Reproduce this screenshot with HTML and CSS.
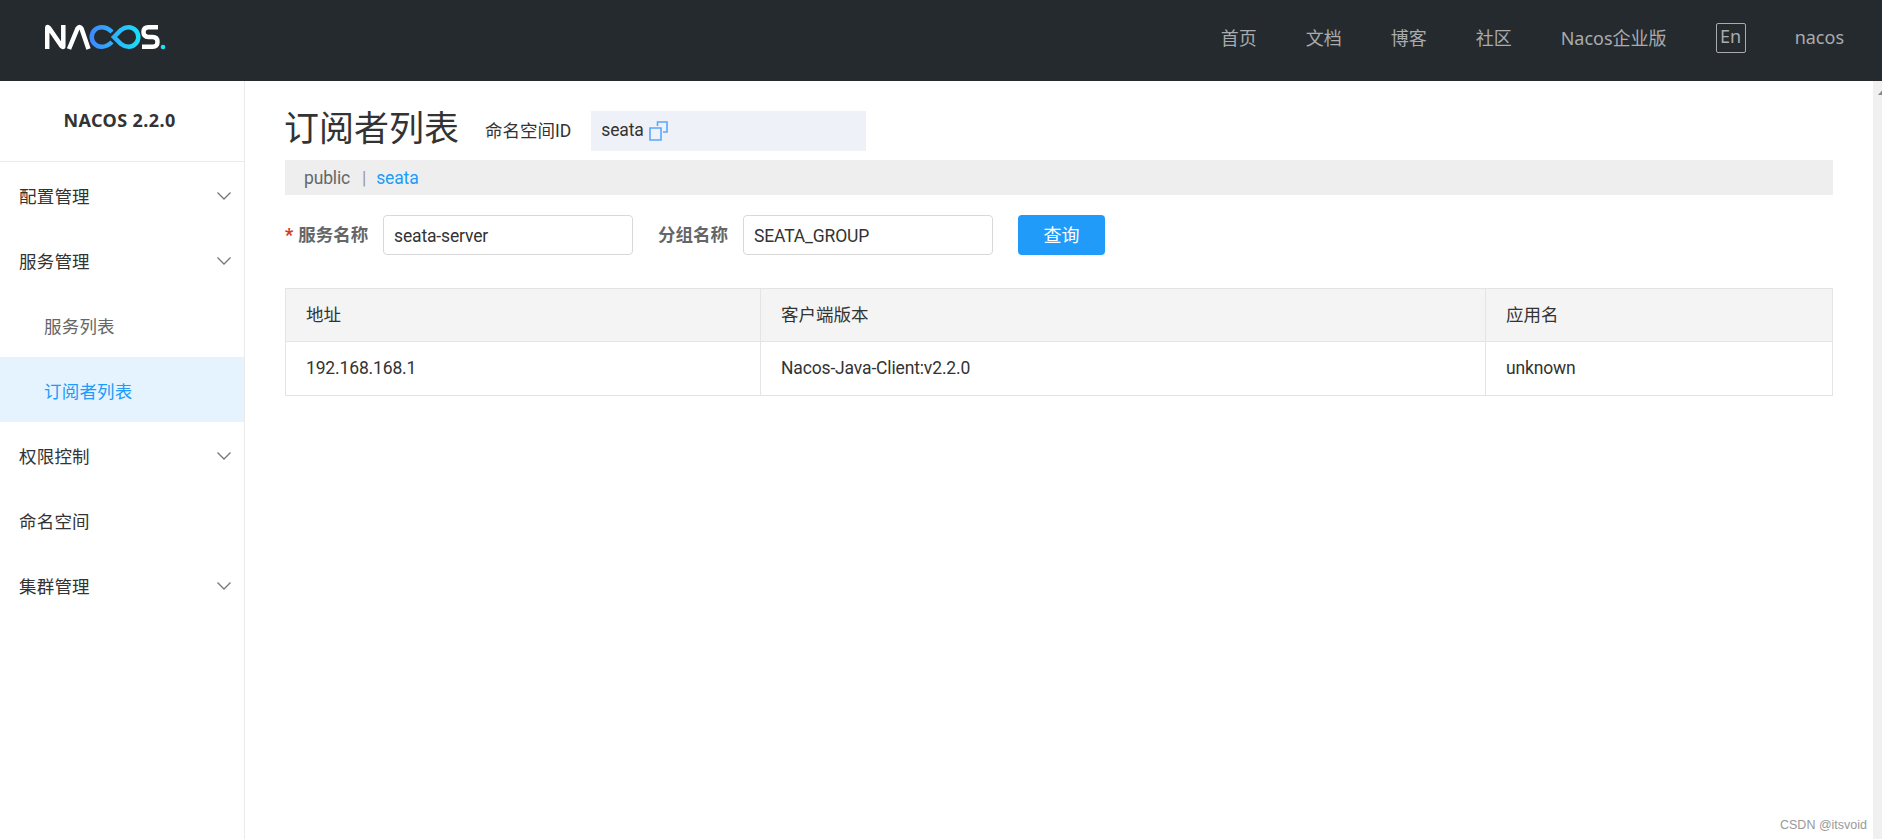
FILE: index.html
```
<!DOCTYPE html>
<html lang="zh-CN">
<head>
<meta charset="UTF-8">
<meta name="viewport" content="width=device-width, initial-scale=1">
<title>Nacos</title>
<link rel="stylesheet" href="styles.css">
</head>
<body>

  <!-- Header -->
  <header class="header">
    <a class="logo" href="#">
      <svg width="122" height="26" viewBox="0 0 122 26" fill="none" stroke-width="4.500">
        <defs>
          <linearGradient id="loop" x1="45" y1="0" x2="95" y2="0" gradientUnits="userSpaceOnUse">
            <stop offset="0" stop-color="#3f87ff"/>
            <stop offset="1" stop-color="#1be0f8"/>
          </linearGradient>
        </defs>
        <path d="M2.200 25V4Q2.200 2 4 4L16.500 22Q18.300 24 18.300 22V1" stroke="#fff"/>
        <path d="M24 25L32.500 4.500Q34.500 1.500 36.500 4.500L43.500 25" stroke="#fff"/>
        <path d="M67 8C63 4 60 3.200 56.500 3.200A9.800 9.800 0 0 0 56.500 22.800C60 22.800 63 22 67 18" stroke="url(#loop)"/>
        <path d="M69 13L76 6C79 3.700 81 3.200 83.500 3.200A9.800 9.800 0 0 1 83.500 22.800C81 22.800 79 22.300 76 20Z" stroke="url(#loop)"/>
        <path d="M113 3.200H103.500Q98.500 3.200 98.500 8T103.500 13H107.500Q112.500 13 112.500 18T107.500 22.800H97" stroke="#fff"/>
        <circle cx="118" cy="23" r="2.300" fill="#1be0f8"/>
      </svg>
    </a>
    <nav class="nav">
      <a href="#">首页</a>
      <a href="#">文档</a>
      <a href="#">博客</a>
      <a href="#">社区</a>
      <a href="#">Nacos企业版</a>
      <span class="lang">En</span>
      <a href="#">nacos</a>
    </nav>
  </header>

  <div class="container">
    <!-- Sidebar -->
    <aside class="sidebar">
      <h1 class="version">NACOS 2.2.0</h1>
      <ul class="menu">
        <li>配置管理<svg class="arrow" viewBox="0 0 14 8"><path d="M.5.5L7 7L13.500.5"/></svg></li>
        <li>服务管理<svg class="arrow" viewBox="0 0 14 8"><path d="M.5.5L7 7L13.500.5"/></svg></li>
        <li class="sub">服务列表</li>
        <li class="sub active">订阅者列表</li>
        <li>权限控制<svg class="arrow" viewBox="0 0 14 8"><path d="M.5.5L7 7L13.500.5"/></svg></li>
        <li>命名空间</li>
        <li>集群管理<svg class="arrow" viewBox="0 0 14 8"><path d="M.5.5L7 7L13.500.5"/></svg></li>
      </ul>
    </aside>

    <!-- Main content -->
    <main class="main">
      <div class="page-title">
        <h2>订阅者列表</h2>
        <span class="ns-label">命名空间ID</span>
        <div class="ns-id">
          <span>seata</span>
          <svg class="copy" width="19" height="20" viewBox="0 0 19 20"><path d="M1 7H12V19H1ZM8.500 5V1H18V11H14"/></svg>
        </div>
      </div>

      <div class="ns-bar">
        <span class="ns">public</span>
        <span class="split">|</span>
        <span class="ns current">seata</span>
      </div>

      <form class="search">
        <label for="service"><b class="required">*</b>服务名称</label>
        <input id="service" type="text" value="seata-server">
        <label class="group" for="group">分组名称</label>
        <input id="group" type="text" value="SEATA_GROUP">
        <button type="button">查询</button>
      </form>

      <table class="table">
        <colgroup><col class="c-addr"><col class="c-client"><col></colgroup>
        <thead>
          <tr><th>地址</th><th>客户端版本</th><th>应用名</th></tr>
        </thead>
        <tbody>
          <tr><td>192.168.168.1</td><td>Nacos-Java-Client:v2.2.0</td><td>unknown</td></tr>
        </tbody>
      </table>
    </main>

    <div class="scrollbar"><svg width="9" height="8" viewBox="0 0 9 8"><path d="M5 6L9 1.500V6Z"/></svg></div>
  </div>

  <div class="watermark">CSDN @itsvoid</div>

</body>
</html>
```

FILE: styles.css
```
* {
  box-sizing: border-box;
}

body {
  margin: 0;
  height: 839px;
  overflow: hidden;
  background: #fff;
  color: #333;
  font-family: Roboto, "Noto Sans CJK SC", sans-serif;
  font-size: 17.5px;
  font-weight: 400;
}

/* header */
.header {
  display: flex;
  justify-content: space-between;
  height: 81px;
  padding: 0 38px 0 45px;
  background: #252a2f;
}

.logo {
  margin-top: 24px;
  height: 26px;
}

.logo svg {
  display: block;
}

.nav {
  display: flex;
  align-items: center;
  gap: 49px;
  height: 76px;
  font-family: "Noto Sans", "Noto Sans CJK SC", sans-serif;
  font-size: 18px;
}

.nav a {
  padding-bottom: 2px;
  color: #a9abad;
  text-decoration: none;
}

.lang {
  width: 30px;
  height: 30px;
  border: 1px solid #a9abad;
  border-radius: 2px;
  color: #a9abad;
  line-height: 24px;
  text-align: center;
}

/* layout */
.container {
  display: flex;
  height: 758px;
}

.sidebar {
  flex: none;
  width: 245px;
  border-right: 1px solid #ebebeb;
}

.version {
  height: 81px;
  margin: 0;
  padding-right: 5px;
  border-bottom: 1px solid #ebebeb;
  font: bold 18px/79px "Noto Sans", sans-serif;
  letter-spacing: 0.4px;
  text-align: center;
}

.menu {
  margin: 0;
  padding: 0;
  list-style: none;
}

.menu li {
  display: flex;
  align-items: center;
  justify-content: space-between;
  height: 65px;
  padding: 2px 13px 0 19px;
  letter-spacing: 0.2px;
}

.menu .sub {
  padding-left: 44px;
  color: #666;
}

.menu .active {
  background: #e4f3fe;
  color: #209bfa;
}

.arrow {
  width: 14px;
  height: 8px;
  fill: none;
  stroke: #777;
  stroke-width: 1.3;
}

/* main */
.main {
  flex: 1;
  padding: 30px 40px 0;
}

.page-title {
  display: flex;
  align-items: center;
  height: 40px;
}

.page-title h2 {
  margin: -2px 26px 0 -1px;
  font-size: 35px;
  font-weight: 400;
  line-height: 40px;
}

.ns-label {
  padding-bottom: 4px;
}

.ns-id {
  display: flex;
  align-items: center;
  gap: 5px;
  width: 275px;
  height: 40px;
  margin-left: 20px;
  padding-left: 10px;
  background: #eef1f7;
  letter-spacing: -0.15px;
}

.ns-id span {
  padding-bottom: 2px;
}

.copy {
  fill: none;
  stroke: #5ba7fb;
  stroke-width: 1.6;
}

.ns-bar {
  display: flex;
  align-items: center;
  height: 35px;
  margin-top: 9px;
  padding-left: 19px;
  background: #eee;
  letter-spacing: -0.15px;
}

.ns {
  color: #666;
}

.split {
  margin: 0 10px 0 12px;
  color: #999;
}

.current {
  color: #209bfa;
}

.search {
  display: flex;
  align-items: center;
  margin-top: 20px;
}

.search label {
  width: 98px;
  padding-bottom: 3px;
  color: #666;
  font-weight: 700;
}

.required {
  margin-right: 5px;
  color: #d23c26;
}

.search .group {
  width: 85px;
  margin-left: 25px;
}

.search input {
  width: 250px;
  height: 40px;
  padding: 1px 10px 0;
  border: 1px solid #d8d8d8;
  border-radius: 4px;
  color: #333;
  font: inherit;
  letter-spacing: -0.15px;
}

.search button {
  width: 87px;
  height: 40px;
  margin-left: 25px;
  padding: 0 0 3px;
  border: 0;
  border-radius: 4px;
  background: #209bfa;
  color: #fff;
  font: inherit;
  font-size: 18px;
}

.table {
  width: 1548px;
  margin-top: 33px;
  border-collapse: collapse;
  table-layout: fixed;
}

.c-addr {
  width: 475px;
}

.c-client {
  width: 725px;
}

.table th,
.table td {
  height: 53px;
  padding: 0 20px 3px;
  border: 1px solid #e4e4e4;
  font-weight: 400;
  text-align: left;
}

.table td {
  height: 54px;
  padding-bottom: 2px;
  letter-spacing: -0.15px;
}

.table th {
  background: #f4f4f4;
}

.scrollbar {
  flex: none;
  width: 9px;
  padding-top: 8px;
  background: #f0f0f0;
}

.scrollbar svg {
  display: block;
  fill: #888;
}

/* laid over the page corner */
.watermark {
  position: absolute;
  right: 15px;
  bottom: 6px;
  color: #999;
  font: 12.5px/16px "Liberation Sans", Arial, sans-serif;
}
```
